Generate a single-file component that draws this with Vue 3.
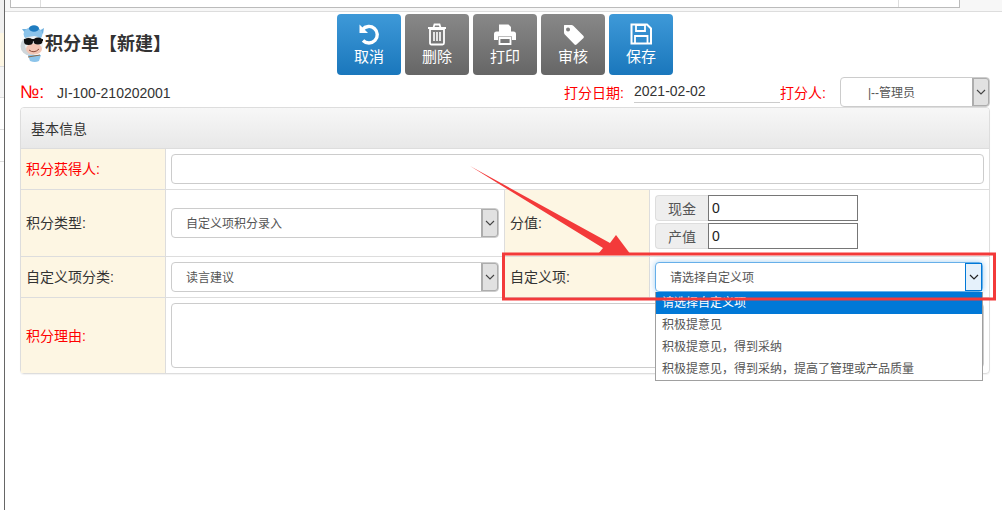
<script setup>
const buttons = [
  { label: '取消', tone: 'blue', icon: 'undo' },
  { label: '删除', tone: 'gray', icon: 'trash' },
  { label: '打印', tone: 'gray', icon: 'print' },
  { label: '审核', tone: 'gray', icon: 'tag' },
  { label: '保存', tone: 'blue', icon: 'save' }
]
const comma = '\uFF0C'
const options = [
  '请选择自定义项',
  '积极提意见',
  '积极提意见' + comma + '得到采纳',
  '积极提意见' + comma + '得到采纳' + comma + '提高了管理或产品质量'
]
</script>

<template>
  <div class="page">
    <aside class="side">
      <div class="strip s1"></div>
      <div class="strip s2"></div>
      <div class="strip s3"></div>
      <div class="strip s4"></div>
      <div class="strip s5"></div>
    </aside>
    <main class="main">
      <div class="topbar">
        <div class="topwin">
          <span class="tick t1"></span>
          <span class="tick t2"></span>
        </div>
      </div>

      <header class="head">
        <div class="brand">
          <svg class="logo" viewBox="0 0 25 38" width="25" height="38">
            <path d="M5 8 L2 4 L8 4 Z M19 6 L24 3 L23 9 Z" fill="#6fb0de" />
            <ellipse cx="13" cy="9" rx="9.5" ry="7" fill="#8cc4ea" />
            <ellipse cx="14" cy="3.5" rx="5" ry="3.2" fill="#1f7cc0" />
            <ellipse cx="10" cy="21" rx="9.5" ry="9.5" fill="#cfd6da" />
            <ellipse cx="14" cy="20" rx="9" ry="9" fill="#eef1f2" />
            <ellipse cx="14" cy="24" rx="8" ry="5.5" fill="#f3c6b4" />
            <path d="M9 25 Q14 29 19 24" fill="none" stroke="#8a4a3a" stroke-width="1" />
            <ellipse cx="8.5" cy="16.5" rx="4.5" ry="3.6" fill="#111" />
            <ellipse cx="18" cy="16" rx="4.5" ry="3.6" fill="#111" />
            <path d="M4 14 H23 V16 H4 Z" fill="#111" />
            <path d="M8 30 H21 L19 36 Q15 38 10 36 Z" fill="#8cc4ea" />
            <path d="M8 32 L20 30" stroke="#8a6a4a" stroke-width="1" />
          </svg>
          <h1 class="title">积分单【新建】</h1>
        </div>
        <div class="toolbar">
          <button v-for="b in buttons" :key="b.label" class="tool" :class="b.tone" type="button">
            <svg class="ico" viewBox="0 0 24 24" width="24" height="24">
              <template v-if="b.icon === 'undo'">
                <path d="M5.5 7.5 A8.3 8.3 0 1 1 6 18.5" fill="none" stroke="#fff" stroke-width="3.4" />
                <path d="M2.5 2.5 V11 H11 Z" fill="#fff" />
              </template>
              <template v-else-if="b.icon === 'trash'">
                <path d="M5 7 H19 V21 Q19 22.5 17.5 22.5 H6.5 Q5 22.5 5 21 Z" fill="none" stroke="#fff" stroke-width="1.8" />
                <path d="M3 6 H21 M8.5 5.5 L9.5 2.5 H14.5 L15.5 5.5" fill="none" stroke="#fff" stroke-width="1.8" />
                <path d="M9 10 V19 M12 10 V19 M15 10 V19" stroke="#fff" stroke-width="1.6" />
              </template>
              <template v-else-if="b.icon === 'print'">
                <path d="M6 10 V2.5 H15.5 L18 5 V10 Z" fill="#fff" />
                <path d="M1 12 Q1 9.5 3.5 9.5 H20.5 Q23 9.5 23 12 V18 H19 V14.5 H5 V18 H1 Z" fill="#fff" />
                <path d="M6.5 16 H17.5 V22 H6.5 Z" fill="none" stroke="#fff" stroke-width="1.8" />
              </template>
              <template v-else-if="b.icon === 'tag'">
                <path fill-rule="evenodd" d="M3.5 3 H10.5 Q11.5 3 12.3 3.8 L22.5 14 Q23.3 15 22.5 16 L15.5 22.5 Q14.5 23.3 13.5 22.5 L3.8 12.5 Q3 11.7 3 10.5 V3.5 Q3 3 3.5 3 Z M7 5.5 A2 2 0 1 0 7.1 9.5 A2 2 0 1 0 7 5.5 Z" fill="#fff" />
              </template>
              <template v-else>
                <path d="M2.5 2.5 H18 L22 6.5 V21.5 H2.5 Z" fill="none" stroke="#fff" stroke-width="2" />
                <path d="M7 3 H16 V9 H7 Z" fill="none" stroke="#fff" stroke-width="1.8" />
                <path d="M6 21 V14 H18.5 V21" fill="none" stroke="#fff" stroke-width="1.8" />
              </template>
            </svg>
            <span>{{ b.label }}</span>
          </button>
        </div>
      </header>

      <div class="meta">
        <span class="no">№:</span>
        <span class="code">JI-100-210202001</span>
        <span class="meta-label date-label">打分日期:</span>
        <span class="date">2021-02-02</span>
        <span class="meta-label person-label">打分人:</span>
        <div class="select person">
          <span class="sel-text">|--管理员</span>
          <span class="arrow"><svg viewBox="0 0 10 6" width="10" height="6"><path d="M1 1 L5 5 L9 1" fill="none" stroke="#444" stroke-width="1.1" /></svg></span>
        </div>
      </div>

      <section class="panel">
        <div class="panel-head">基本信息</div>

        <div class="row r1">
          <div class="lab req">积分获得人:</div>
          <div class="val"><div class="input"></div></div>
        </div>

        <div class="row split r2">
          <div class="lab">积分类型:</div>
          <div class="val divided">
            <div class="select">
              <span class="sel-text">自定义项积分录入</span>
              <span class="arrow"><svg viewBox="0 0 10 6" width="10" height="6"><path d="M1 1 L5 5 L9 1" fill="none" stroke="#444" stroke-width="1.1" /></svg></span>
            </div>
          </div>
          <div class="lab">分值:</div>
          <div class="val money">
            <div class="group"><span class="addon">现金</span><span class="num">0</span></div>
            <div class="group"><span class="addon">产值</span><span class="num">0</span></div>
          </div>
        </div>

        <div class="row split r3">
          <div class="lab">自定义项分类:</div>
          <div class="val divided">
            <div class="select">
              <span class="sel-text">读言建议</span>
              <span class="arrow"><svg viewBox="0 0 10 6" width="10" height="6"><path d="M1 1 L5 5 L9 1" fill="none" stroke="#444" stroke-width="1.1" /></svg></span>
            </div>
          </div>
          <div class="lab">自定义项:</div>
          <div class="val wide">
            <div class="select focus">
              <span class="sel-text">请选择自定义项</span>
              <span class="arrow"><svg viewBox="0 0 10 6" width="10" height="6"><path d="M1 1 L5 5 L9 1" fill="none" stroke="#222" stroke-width="1.2" /></svg></span>
              <ul class="menu">
                <li v-for="(o, i) in options" :key="o" :class="{ on: i === 0 }">{{ o }}</li>
              </ul>
            </div>
          </div>
        </div>

        <div class="row r4">
          <div class="lab req">积分理由:</div>
          <div class="val"><div class="input area"></div></div>
        </div>
      </section>
    </main>

    <svg class="marks" viewBox="0 0 1002 510" width="1002" height="510">
      <rect x="503.5" y="254" width="491" height="45" fill="none" stroke="#f33a3a" stroke-width="3" />
      <polygon points="470,166 610,243 616,235 631,255 598,254 603,248" fill="#f33a3a" />
    </svg>
  </div>
</template>

<style scoped>
.page {
  position: relative;
  display: flex;
  width: 1002px;
  height: 510px;
  overflow: hidden;
  background: #fff;
  color: #333;
  font: 14px "Liberation Sans", "Noto Sans CJK SC", sans-serif;
}
.side {
  width: 4px;
  flex: none;
  border-right: 1px solid #666;
  display: flex;
  flex-direction: column;
}
.strip { border-bottom: 1px solid #ddd; }
.s1 { height: 33px; background: #f0f0f0; border: 0; }
.s2 { height: 33px; background: #fdf6e3; }
.s3 { height: 30px; background: #f5f5f5; }
.s4 { height: 31px; background: #fff; }
.s5 { height: 31px; background: #fff; }
.main {
  flex: 1;
  min-width: 0;
  padding-left: 15px;
}
.topbar {
  height: 11px;
  margin-left: -15px;
  background: #f7f7f7;
  border-bottom: 1px solid #ddd;
}
.topwin {
  position: relative;
  width: 948px;
  height: 7px;
  margin-left: 5px;
  background: #fff;
  border: solid #bbb;
  border-width: 0 1px 1px;
}
.tick {
  position: absolute;
  top: 0;
  width: 1px;
  height: 7px;
  background: #ddd;
}
.t1 { left: 29px; }
.t2 { left: 887px; }

.head {
  display: flex;
  height: 64px;
  padding-top: 2px;
  box-sizing: border-box;
}
.brand {
  display: flex;
  align-items: flex-start;
  width: 317px;
  flex: none;
  height: 62px;
}
.logo { flex: none; margin-top: 11px; }
.title {
  margin: 17px 0 0;
  font-size: 18px;
  line-height: 26px;
  font-weight: 700;
  color: #333;
}
.toolbar { display: flex; gap: 4px; }
.tool {
  width: 64px;
  height: 61px;
  border: 0;
  border-radius: 4px;
  padding: 8px 0 0;
  display: flex;
  flex-direction: column;
  align-items: center;
  gap: 1px;
  color: #fff;
  font: 15px "Liberation Sans", "Noto Sans CJK SC", sans-serif;
  line-height: 20px;
}
.tool.blue { background: linear-gradient(#3e99d8, #1a77bc); }
.tool.gray { background: linear-gradient(#888, #666); }

.meta {
  display: flex;
  align-items: center;
  height: 31px;
}
.no {
  width: 37px;
  font-size: 18px;
  color: #f00;
  flex: none;
  padding-top: 1px;
  box-sizing: border-box;
}
.code { width: 507px; flex: none; margin-top: 2px; }
.meta-label { color: #f00; flex: none; }
.date-label { width: 70px; }
.person-label { width: 60px; }
.date {
  width: 146px;
  flex: none;
  align-self: flex-end;
  height: 26px;
  padding-top: 2px;
  line-height: 24px;
  box-sizing: border-box;
  border-bottom: 1px solid #ccc;
  margin-bottom: 4px;
}

.select {
  position: relative;
  display: flex;
  align-items: center;
  box-sizing: border-box;
  height: 30px;
  border: 1px solid #ccc;
  border-radius: 4px;
  background: #fff;
  font-size: 12px;
  color: #555;
}
.sel-text { flex: 1; padding: 0 0 1px 14px; }
.arrow {
  flex: none;
  width: 16px;
  align-self: stretch;
  display: flex;
  align-items: center;
  justify-content: center;
  background: #e1e1e1;
  border-left: 1px solid #adadad;
  box-shadow: inset 0 0 0 1px #adadad;
  border-radius: 0 3px 3px 0;
}
.person { width: 150px; flex: none; margin-top: 1px; }
.person .sel-text { padding-left: 27px; }

.panel {
  width: 970px;
  box-sizing: border-box;
  border: 1px solid #ddd;
  border-radius: 4px;
  box-shadow: 0 1px 1px rgba(0, 0, 0, .05);
}
.panel-head {
  height: 41px;
  box-sizing: border-box;
  display: flex;
  align-items: center;
  padding: 0 0 1px 10px;
  background: linear-gradient(#f7f7f7, #e8e8e8);
  border-bottom: 1px solid #ddd;
  border-radius: 3px 3px 0 0;
}
.row {
  display: grid;
  grid-template-columns: 145px 1fr;
  box-sizing: border-box;
  border-bottom: 1px solid #ddd;
}
.row.split { grid-template-columns: 145px 339px 145px 1fr; }
.r1 { height: 41px; }
.r2 { height: 67px; }
.r3 { height: 41px; }
.r4 { height: 75px; border-bottom: 0; }
.lab {
  display: flex;
  align-items: center;
  padding: 0 0 2px 5px;
  background: #fdf6e3;
  border-right: 1px solid #ddd;
}
.req { color: #f00; }
.val {
  display: flex;
  align-items: center;
  padding: 0 5px;
  min-width: 0;
}
.divided { border-right: 1px solid #ddd; }
.val > .select { flex: 1; }
.wide { padding-right: 6px; }
.input {
  flex: 1;
  height: 30px;
  box-sizing: border-box;
  border: 1px solid #ccc;
  border-radius: 4px;
}
.area { height: 65px; }
.money {
  flex-direction: column;
  align-items: flex-start;
  justify-content: center;
  gap: 2px;
  padding-bottom: 2px;
  box-sizing: border-box;
}
.group { display: flex; height: 26px; }
.addon {
  width: 53px;
  box-sizing: border-box;
  display: flex;
  align-items: center;
  justify-content: center;
  padding-bottom: 1px;
  background: #eee;
  border: 1px solid #ddd;
  border-right: 0;
  border-radius: 4px 0 0 4px;
  color: #555;
}
.num {
  width: 150px;
  box-sizing: border-box;
  padding-left: 3px;
  border: 1px solid #767676;
  line-height: 24px;
  font-size: 14px;
  color: #222;
}
.focus {
  height: 30px;
  border-color: #66afe9;
  box-shadow: 0 0 6px rgba(102, 175, 233, .6);
}
.focus .arrow {
  background: #e5f1fb;
  border-left: 0;
  box-shadow: inset 0 0 0 1px #0078d7;
  width: 17px;
  border-radius: 0;
}
.menu {
  position: absolute;
  left: -1px;
  right: -1px;
  top: 29px;
  margin: 0;
  padding: 0;
  list-style: none;
  background: #fff;
  border: 1px solid #a0a0a0;
  border-top: 0;
  color: #555;
  z-index: 2;
}
.menu li {
  height: 22px;
  line-height: 22px;
  padding-left: 6px;
}
.menu .on { background: #0078d7; color: #fff; }
.marks {
  position: absolute;
  left: 0;
  top: 0;
  z-index: 3;
  pointer-events: none;
}
</style>
